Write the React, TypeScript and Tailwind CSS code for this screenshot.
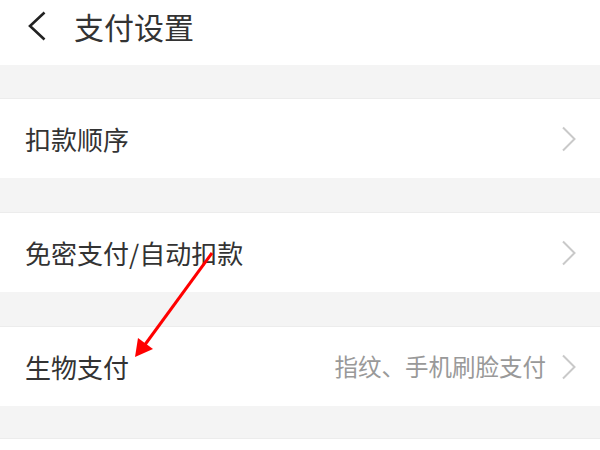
import React from "react";

const font = { fontFamily: '"Noto Sans CJK SC", "Noto Sans", sans-serif' };

function Chevron() {
    return (
        <svg width="16" height="26" viewBox="0 0 16 26" className="shrink-0">
            <path d="M2 1.5 L13.5 13 L2 24.5" fill="none" stroke="#c9c9c9" strokeWidth={2} />
        </svg>
    );
}

function Row({ label, value }: { label: string; value?: string }) {
    return (
        <div className="h-[80px] bg-white border-t border-[#ececec] flex items-center pl-[25px] pr-[23px]">
            <span className="flex-1 text-[26px] text-[#333333] leading-none">{label}</span>
            {value && <span className="text-[23.5px] text-[#999999] leading-none mr-[15px]">{value}</span>}
            <Chevron />
        </div>
    );
}

export default function App() {
    return (
        <div className="relative w-[600px] h-[450px] overflow-hidden bg-[#f4f4f4]" style={font}>
            {/* Header */}
            <div className="h-[65px] bg-white flex items-center">
                <svg width="20" height="30" viewBox="0 0 20 30" className="ml-[27px] mt-[-14px]">
                    <path d="M17.5 1.5 L3 15 L17.5 28.5" fill="none" stroke="#222222" strokeWidth={2.6} />
                </svg>
                <span className="ml-[27px] mt-[-14px] text-[30px] text-[#333333] leading-none">支付设置</span>
            </div>

            <div className="h-[33px]" />
            <Row label="扣款顺序" />
            <div className="h-[34px]" />
            <Row label="免密支付/自动扣款" />
            <div className="h-[34px]" />
            <Row label="生物支付" value="指纹、手机刷脸支付" />
            <div className="h-[32px]" />
            <div className="h-[20px] bg-white border-t border-[#ececec]" />

            {/* Annotation arrow */}
            <svg className="absolute left-0 top-0 pointer-events-none" width="600" height="450" viewBox="0 0 600 450">
                <line x1="212" y1="253" x2="144" y2="346" stroke="#ff0000" strokeWidth={3} />
                <polygon points="135,357 138,338 153,349" fill="#ff0000" />
            </svg>
        </div>
    );
}
